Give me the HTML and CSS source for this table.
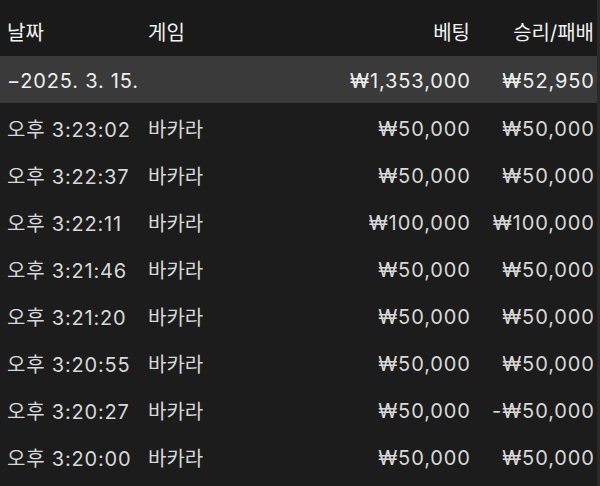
FILE: index.html
```html
<!DOCTYPE html>
<html lang="ko">
<head>
<meta charset="utf-8">
<link rel="stylesheet" href="styles.css">
</head>
<body>
<div class="table">
  <div class="row head">
    <div>날짜</div><div>게임</div><div class="label">베팅</div><div class="label">승리/패배</div>
  </div>
  <div class="row group">
    <div class="span2 d">−2025. 3. 15.</div><div class="num">₩1,353,000</div><div class="num">₩52,950</div>
  </div>
  <div class="row"><div class="d">오후 3:23:02</div><div>바카라</div><div class="num">₩50,000</div><div class="num">₩50,000</div></div>
  <div class="row"><div class="d">오후 3:22:37</div><div>바카라</div><div class="num">₩50,000</div><div class="num">₩50,000</div></div>
  <div class="row"><div class="d">오후 3:22:11</div><div>바카라</div><div class="num">₩100,000</div><div class="num">₩100,000</div></div>
  <div class="row"><div class="d">오후 3:21:46</div><div>바카라</div><div class="num">₩50,000</div><div class="num">₩50,000</div></div>
  <div class="row"><div class="d">오후 3:21:20</div><div>바카라</div><div class="num">₩50,000</div><div class="num">₩50,000</div></div>
  <div class="row"><div class="d">오후 3:20:55</div><div>바카라</div><div class="num">₩50,000</div><div class="num">₩50,000</div></div>
  <div class="row"><div class="d">오후 3:20:27</div><div>바카라</div><div class="num">₩50,000</div><div class="num">-₩50,000</div></div>
  <div class="row"><div class="d">오후 3:20:00</div><div>바카라</div><div class="num">₩50,000</div><div class="num">₩50,000</div></div>
</div>
</body>
</html>
```
FILE: styles.css
```css
html, body {
  margin: 0;
  padding: 0;
  background: #1c1c1c;
  height: 100%;
  overflow: hidden;
}
body {
  font-family: Inter, "Noto Sans CJK KR", sans-serif;
  font-size: 20px;
  color: #d8d8d8;
  border-right: 3px solid #2a2a2a;
  box-sizing: border-box;
}
.table {
  display: flex;
  flex-direction: column;
}
.row {
  display: grid;
  grid-template-columns: 141px 1fr 124px 124px;
  align-items: center;
  height: 47px;
  padding: 4px 3px 0 7px;
  box-sizing: border-box;
  white-space: nowrap;
}
.row.head {
  color: #f2f2f2;
  background: #1a1a1a;
  padding-top: 7px;
  height: 56px;
}
.row.group {
  background: #3a3a3a;
  color: #eeeeee;
  padding-top: 3px;
}
.span2 {
  grid-column: span 2;
}
.d {
  letter-spacing: 0.8px;
}
.label {
  text-align: right;
}
.num {
  text-align: right;
  letter-spacing: 0.9px;
  margin-right: -0.9px;
}
```
